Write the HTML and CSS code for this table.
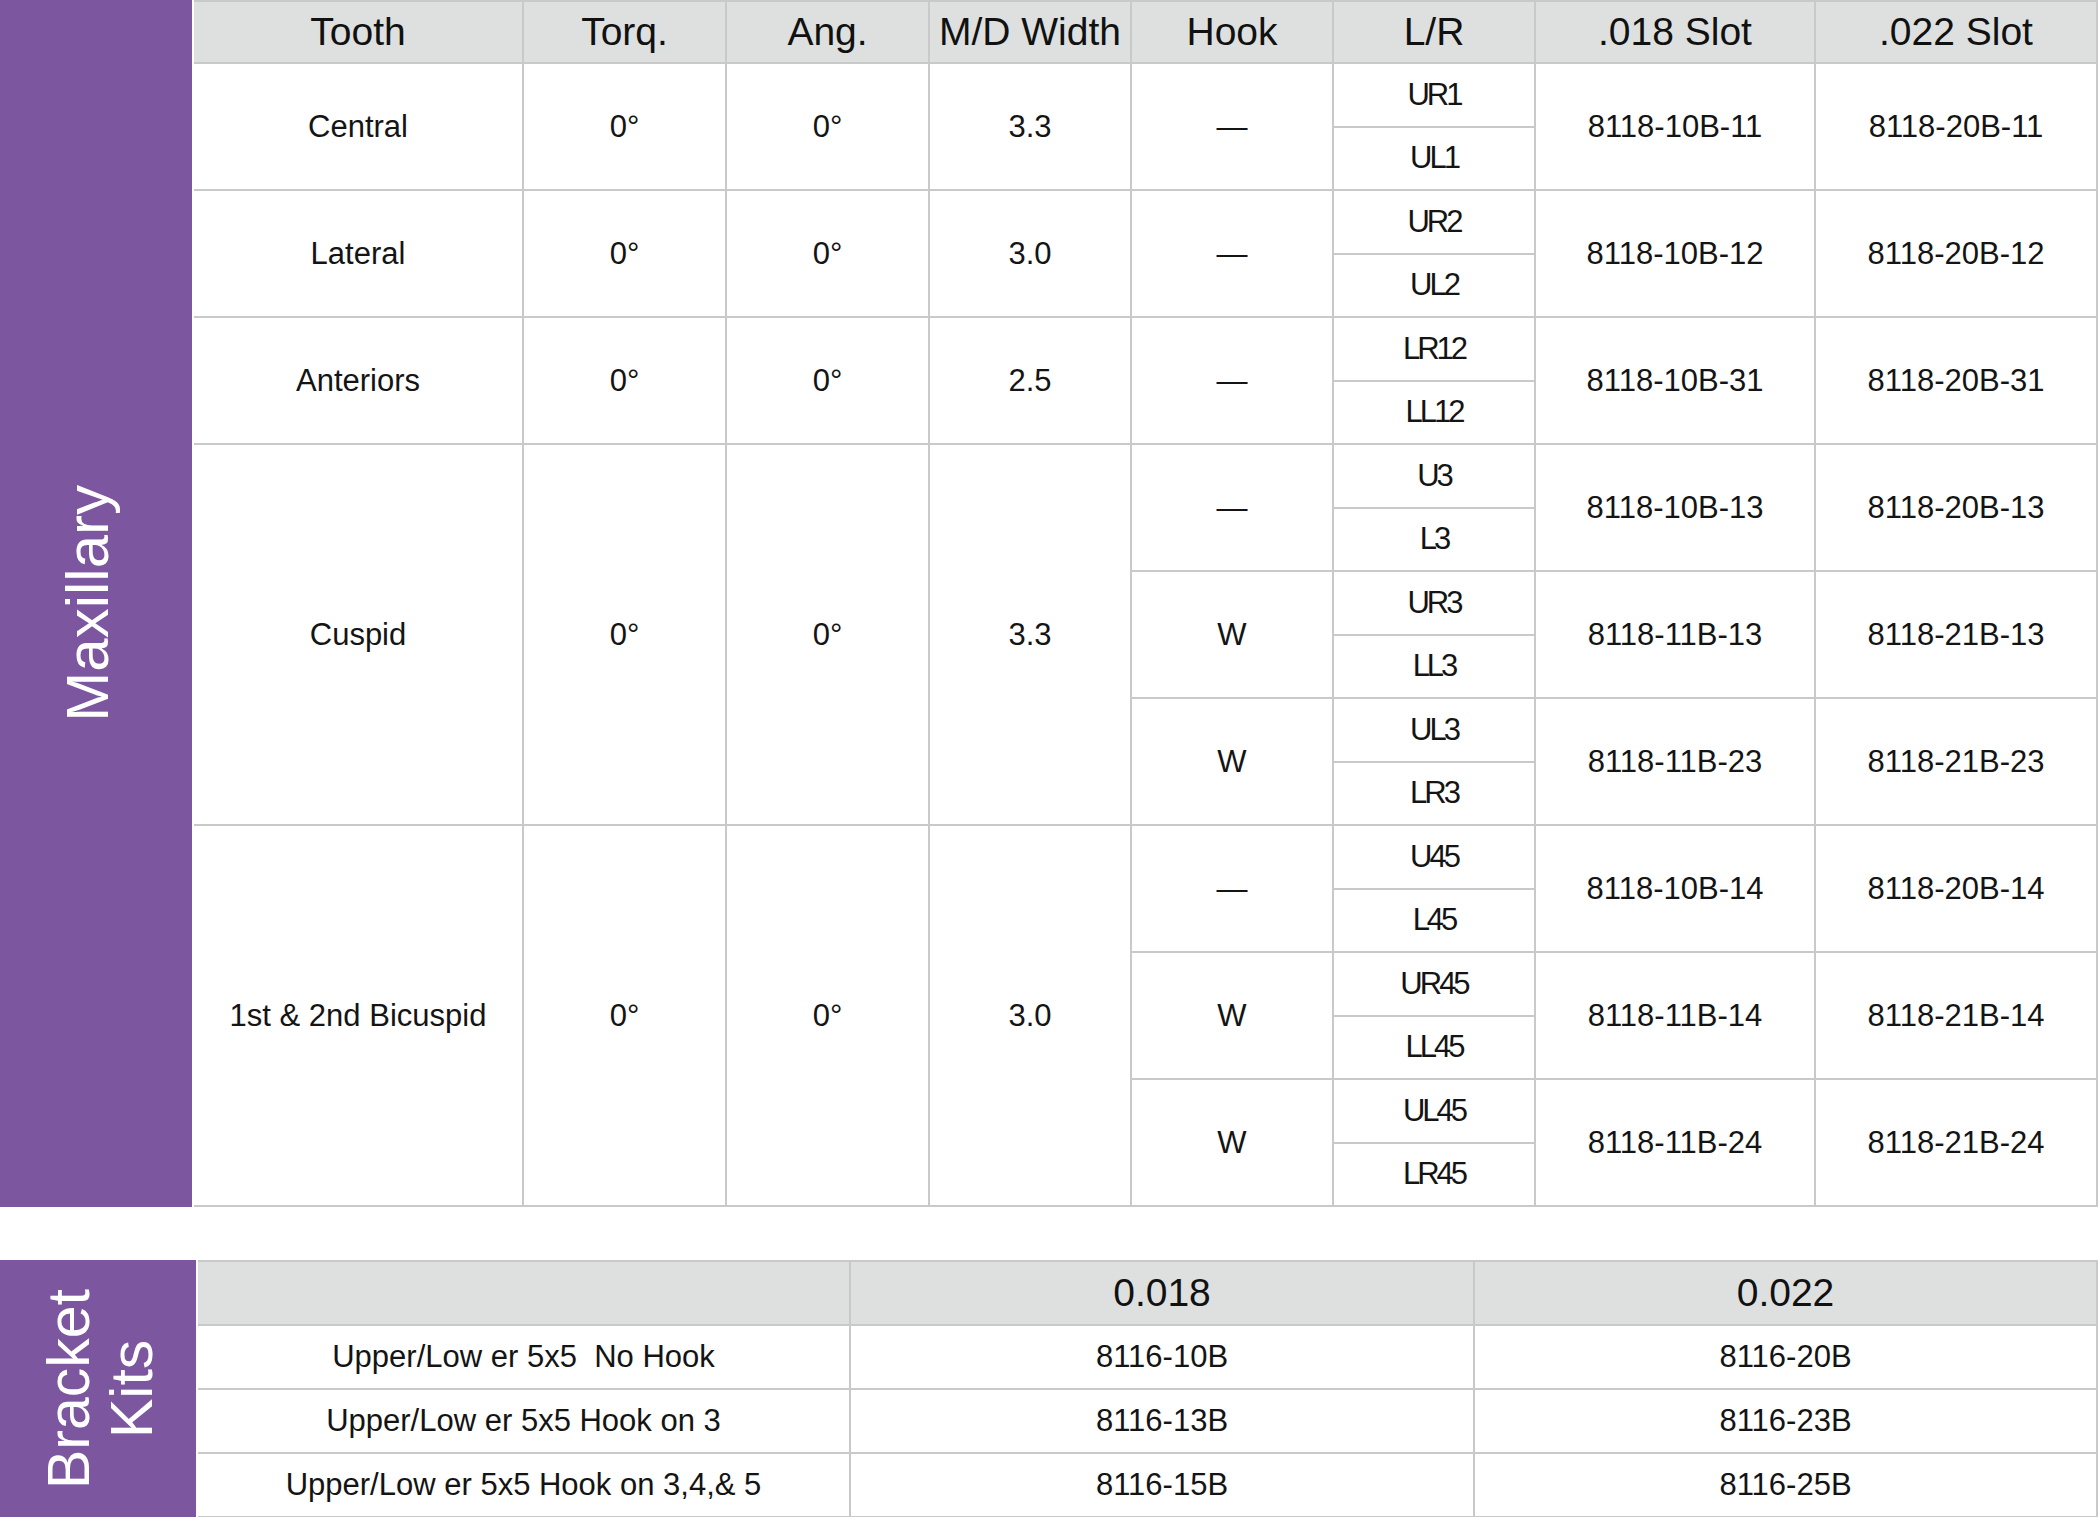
FILE: index.html
```html
<!DOCTYPE html>
<html lang="en">
<head>
<meta charset="utf-8">
<title>Maxillary Brackets</title>
<link rel="stylesheet" href="styles.css">
</head>
<body>
<div class="page">
  <section class="block maxillary">
    <div class="band"><span class="band-label">Maxillary</span></div>
    <div class="grid spec">
      <div class="cell th">Tooth</div>
      <div class="cell th">Torq.</div>
      <div class="cell th">Ang.</div>
      <div class="cell th">M/D Width</div>
      <div class="cell th">Hook</div>
      <div class="cell th">L/R</div>
      <div class="cell th">.018 Slot</div>
      <div class="cell th">.022 Slot</div>

      <div class="cell r2">Central</div>
      <div class="cell r2">0°</div>
      <div class="cell r2">0°</div>
      <div class="cell r2">3.3</div>
      <div class="cell r2">—</div>
      <div class="cell lr">UR1</div>
      <div class="cell r2">8118-10B-11</div>
      <div class="cell r2">8118-20B-11</div>
      <div class="cell lr">UL1</div>

      <div class="cell r2">Lateral</div>
      <div class="cell r2">0°</div>
      <div class="cell r2">0°</div>
      <div class="cell r2">3.0</div>
      <div class="cell r2">—</div>
      <div class="cell lr">UR2</div>
      <div class="cell r2">8118-10B-12</div>
      <div class="cell r2">8118-20B-12</div>
      <div class="cell lr">UL2</div>

      <div class="cell r2">Anteriors</div>
      <div class="cell r2">0°</div>
      <div class="cell r2">0°</div>
      <div class="cell r2">2.5</div>
      <div class="cell r2">—</div>
      <div class="cell lr">LR12</div>
      <div class="cell r2">8118-10B-31</div>
      <div class="cell r2">8118-20B-31</div>
      <div class="cell lr">LL12</div>

      <div class="cell r6">Cuspid</div>
      <div class="cell r6">0°</div>
      <div class="cell r6">0°</div>
      <div class="cell r6">3.3</div>
      <div class="cell r2">—</div>
      <div class="cell lr">U3</div>
      <div class="cell r2">8118-10B-13</div>
      <div class="cell r2">8118-20B-13</div>
      <div class="cell lr">L3</div>
      <div class="cell r2">W</div>
      <div class="cell lr">UR3</div>
      <div class="cell r2">8118-11B-13</div>
      <div class="cell r2">8118-21B-13</div>
      <div class="cell lr">LL3</div>
      <div class="cell r2">W</div>
      <div class="cell lr">UL3</div>
      <div class="cell r2">8118-11B-23</div>
      <div class="cell r2">8118-21B-23</div>
      <div class="cell lr">LR3</div>

      <div class="cell r6">1st &amp; 2nd Bicuspid</div>
      <div class="cell r6">0°</div>
      <div class="cell r6">0°</div>
      <div class="cell r6">3.0</div>
      <div class="cell r2">—</div>
      <div class="cell lr">U45</div>
      <div class="cell r2">8118-10B-14</div>
      <div class="cell r2">8118-20B-14</div>
      <div class="cell lr">L45</div>
      <div class="cell r2">W</div>
      <div class="cell lr">UR45</div>
      <div class="cell r2">8118-11B-14</div>
      <div class="cell r2">8118-21B-14</div>
      <div class="cell lr">LL45</div>
      <div class="cell r2">W</div>
      <div class="cell lr">UL45</div>
      <div class="cell r2">8118-11B-24</div>
      <div class="cell r2">8118-21B-24</div>
      <div class="cell lr">LR45</div>
    </div>
  </section>

  <section class="block kits">
    <div class="band band-kits"><span class="band-label kits-label">Bracket<br>Kits</span></div>
    <div class="grid kit-grid">
      <div class="cell th"></div>
      <div class="cell th">0.018</div>
      <div class="cell th">0.022</div>

      <div class="cell pre">Upper/Low er 5x5  No Hook</div>
      <div class="cell">8116-10B</div>
      <div class="cell">8116-20B</div>

      <div class="cell pre">Upper/Low er 5x5 Hook on 3</div>
      <div class="cell">8116-13B</div>
      <div class="cell">8116-23B</div>

      <div class="cell pre">Upper/Low er 5x5 Hook on 3,4,&amp; 5</div>
      <div class="cell">8116-15B</div>
      <div class="cell">8116-25B</div>
    </div>
  </section>
</div>
</body>
</html>
```

FILE: styles.css
```css
html, body {
  margin: 0;
  padding: 0;
  background: #ffffff;
}

body {
  font-family: "Liberation Sans", Arial, sans-serif;
  color: #141414;
  width: 2098px;
  overflow: hidden;
}

.page {
  display: flex;
  flex-direction: column;
}

.block {
  display: flex;
  gap: 2px;
}

.band {
  background: #7d56a0;
  display: flex;
  align-items: center;
  justify-content: center;
  flex: none;
}

.maxillary .band {
  width: 192px;
  box-sizing: border-box;
  padding-right: 16px;
}

.band-kits {
  width: 196px;
  box-sizing: border-box;
  padding-left: 6px;
}

.band-label {
  writing-mode: vertical-rl;
  transform: rotate(180deg);
  color: #ffffff;
  font-size: 60px;
  line-height: 64px;
  text-align: center;
  white-space: nowrap;
}

.kits-label {
  font-size: 59px;
  line-height: 63px;
}

.grid {
  display: grid;
  flex: 1;
}

.spec {
  grid-template-columns: 330px 203px 203px 202px 202px 202px 280px 282px;
  grid-template-rows: 64px repeat(18, 63.5px);
}

.kits {
  margin-top: 53px;
}

.kit-grid {
  grid-template-columns: 653px 624px 1fr;
  grid-template-rows: 66px repeat(3, 64px);
}

.cell {
  box-sizing: border-box;
  display: flex;
  align-items: center;
  justify-content: center;
  text-align: center;
  border-right: 2px solid #c9c9c9;
  border-bottom: 2px solid #c9c9c9;
  font-size: 31px;
  white-space: nowrap;
}

.th {
  background: #dde0df;
  border-top: 2px solid #c9c9c9;
  font-size: 39px;
  color: #111111;
}

.r2 {
  grid-row: span 2;
}

.r6 {
  grid-row: span 6;
}

.lr {
  letter-spacing: -3px;
}

.pre {
  white-space: pre;
}
```
